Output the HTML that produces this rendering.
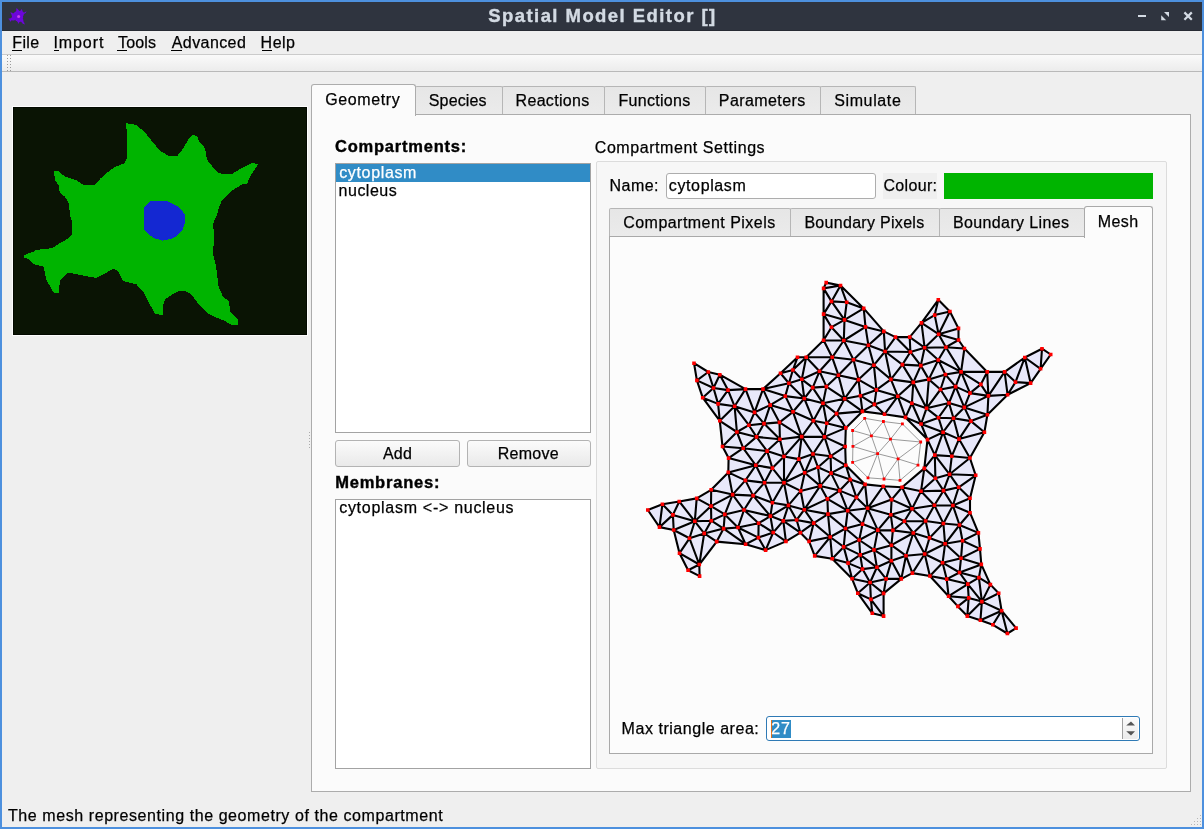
<!DOCTYPE html>
<html><head><meta charset="utf-8"><title>Spatial Model Editor</title>
<style>
*{box-sizing:border-box;margin:0;padding:0}
html,body{width:1204px;height:829px;overflow:hidden;background:#4d90de;font-family:"Liberation Sans",sans-serif}
.a{position:absolute}
#win{left:2px;top:2px;width:1200px;height:825px;background:#efefef}
#titlebar{left:2px;top:2px;width:1200px;height:29px;background:#2f343f;border-bottom:1px solid #272b33}
#menubar{left:2px;top:31px;width:1200px;height:24px;background:#efefef;border-bottom:1px solid #cbcbcb}
#toolbar{left:2px;top:55px;width:1200px;height:17px;background:linear-gradient(#fafafa,#ececec);border-bottom:1px solid #b9b9b9}
.dot{width:1px;height:1px;background:#9a9a9a}
.cellframe{left:12px;top:106px;width:296px;height:230px;background:#fdfdfd}
.cellimg{position:absolute;left:13px;top:107px}
.tabpane{left:311px;top:114px;width:880px;height:678px;background:#fbfbfb;border:1px solid #acacac}
.tab{background:linear-gradient(#e6e6e6,#ebebeb);border:1px solid #b6b6b6;border-bottom:none;border-radius:2px 2px 0 0}
.tabsel{background:#fbfbfb;border:1px solid #acacac;border-bottom:none;border-radius:3px 3px 0 0}
.list{background:#fff;border:1px solid #a3a3a3}
.btn{background:linear-gradient(#fbfbfb,#e9e9e9);border:1px solid #b3b3b3;border-radius:3px}
.group{left:596px;top:161px;width:571px;height:608px;background:#f7f7f7;border:1px solid #dcdcdc;border-radius:2px}
.ledit{background:#fff;border:1px solid #adadad;border-radius:3px}
.innerpane{left:609px;top:236px;width:544px;height:518px;background:#fcfcfc;border:1px solid #a9a9a9}
.mesh{position:absolute;left:640px;top:270px}
.spin{left:766px;top:716px;width:374px;height:25px;background:#fff;border:1.6px solid #2f7ab5;border-radius:3px}
svg.txt{position:absolute;left:0;top:0;will-change:transform;transform:translateZ(0)}
</style></head><body>
<div id="win" class="a"></div>
<div id="titlebar" class="a"></div>
<div class="a" style="left:8px;top:8px"><svg class="appicon" width="20" height="18" viewBox="0 0 20 18"><path d="M8.4,0.3 L9.1,0.5 L10.1,1.5 L11,2.6 L11.5,2.9 L12.2,2.9 L12.7,2.2 L13.5,1.1 L14,1.7 L14.4,2.5 L14.4,3 L14.7,3.4 L15.7,4.4 L16.5,4.4 L17.4,3.8 L18.2,3.4 L18.6,3.6 L18.1,4.3 L17.7,5 L16.6,5.5 L15.7,6.4 L15.6,7.2 L14.9,8.4 L15.2,9.2 L14.9,10.3 L14.9,10.9 L15.3,11.8 L15.4,12.6 L15.4,13.3 L15.8,14.2 L16.2,14.6 L16.4,15.4 L17,16.2 L16.6,16.5 L16,16.1 L15.4,15.9 L14.8,15.7 L14.4,15.2 L14,14.8 L13.1,13.8 L12.3,13.7 L11.8,14 L11,14.6 L11,15.7 L10.5,15.6 L9.9,14.6 L9.6,14 L8.7,13 L7.9,12.9 L7.6,12.2 L7.3,11.8 L6.6,12.2 L5.7,12.6 L4.8,12.4 L3.5,12.2 L2.7,13.3 L2.7,13.8 L2.2,13.6 L1.8,12.8 L1.5,11.7 L0.9,11.6 L0.4,10.8 L1,10.5 L1.8,10.4 L2.6,10.3 L3.2,9.9 L4,9.1 L4,8.4 L3.8,7.9 L3.6,6.7 L2.8,5.6 L2.6,4.8 L2.4,4.1 L3.1,4.4 L3.6,4.6 L4.8,5.2 L5.6,5.2 L6.4,4.5 L7.1,3.8 L7.5,3.8 L8.3,3 L8.3,1.8 L8.3,0.6 Z" fill="#6c06da"/><circle cx="10.6" cy="8.4" r="1.5" fill="#c840f0"/></svg></div>
<!-- window buttons -->
<div class="a" style="left:1138px;top:15px;width:8px;height:2px;background:#d3dae3"></div>
<svg class="a" style="left:1160px;top:11px" width="10" height="10" viewBox="0 0 10 10"><path d="M1.2 9.2 L1.2 4.2 L6.2 9.2 Z M9 1 L9 6 L4 1 Z" fill="#d3dae3"/></svg>
<svg class="a" style="left:1183px;top:11px" width="10" height="10" viewBox="0 0 10 10"><path d="M1.4 1.4 L8.8 8.8 M8.8 1.4 L1.4 8.8" stroke="#d3dae3" stroke-width="2.2"/></svg>
<div id="menubar" class="a"></div>
<div id="toolbar" class="a"></div>
<div class="a dot" style="left:309px;top:432px;background:#ababab"></div><div class="a dot" style="left:309px;top:435px;background:#ababab"></div><div class="a dot" style="left:309px;top:438px;background:#ababab"></div><div class="a dot" style="left:309px;top:441px;background:#ababab"></div><div class="a dot" style="left:309px;top:444px;background:#ababab"></div><div class="a dot" style="left:309px;top:447px;background:#ababab"></div><div class="a dot" style="left:593px;top:447px;background:#ababab"></div><div class="a dot" style="left:593px;top:450px;background:#ababab"></div><div class="a dot" style="left:593px;top:453px;background:#ababab"></div><div class="a dot" style="left:593px;top:456px;background:#ababab"></div><div class="a dot" style="left:593px;top:459px;background:#ababab"></div><div class="a dot" style="left:593px;top:462px;background:#ababab"></div><div class="a dot" style="left:7px;top:55px"></div><div class="a dot" style="left:7px;top:58px"></div><div class="a dot" style="left:7px;top:61px"></div><div class="a dot" style="left:7px;top:64px"></div><div class="a dot" style="left:7px;top:67px"></div><div class="a dot" style="left:7px;top:70px"></div><div class="a dot" style="left:10px;top:55px"></div><div class="a dot" style="left:10px;top:58px"></div><div class="a dot" style="left:10px;top:61px"></div><div class="a dot" style="left:10px;top:64px"></div><div class="a dot" style="left:10px;top:67px"></div><div class="a dot" style="left:10px;top:70px"></div>
<div class="a cellframe"></div>
<svg class="cellimg" width="294" height="228" viewBox="0 0 294 228" shape-rendering="crispEdges"><rect width="294" height="228" fill="#0a1404"/><rect x="0.5" y="0.5" width="293" height="227" fill="none" stroke="#030900"/><path d="M113 16h2v1h-2zM113 17h8v1h-8zM113 18h11v1h-11zM113 19h12v1h-12zM113 20h13v1h-13zM113 21h14v1h-14zM114 22h15v1h-15zM114 23h16v1h-16zM114 24h17v1h-17zM114 25h18v1h-18zM114 26h19v1h-19zM114 27h20v1h-20zM114 28h20v1h-20zM179 28h3v1h-3zM114 29h21v1h-21zM178 29h6v1h-6zM114 30h22v1h-22zM177 30h8v1h-8zM114 31h23v1h-23zM176 31h9v1h-9zM114 32h24v1h-24zM175 32h10v1h-10zM114 33h24v1h-24zM175 33h11v1h-11zM114 34h25v1h-25zM174 34h12v1h-12zM114 35h26v1h-26zM174 35h13v1h-13zM114 36h27v1h-27zM173 36h15v1h-15zM114 37h28v1h-28zM172 37h17v1h-17zM114 38h29v1h-29zM172 38h18v1h-18zM114 39h29v1h-29zM171 39h20v1h-20zM114 40h30v1h-30zM171 40h20v1h-20zM114 41h31v1h-31zM170 41h22v1h-22zM114 42h32v1h-32zM169 42h23v1h-23zM114 43h33v1h-33zM169 43h23v1h-23zM114 44h34v1h-34zM168 44h25v1h-25zM114 45h36v1h-36zM167 45h26v1h-26zM114 46h38v1h-38zM166 46h27v1h-27zM114 47h39v1h-39zM165 47h28v1h-28zM114 48h41v1h-41zM165 48h28v1h-28zM114 49h79v1h-79zM114 50h80v1h-80zM114 51h80v1h-80zM113 52h81v1h-81zM113 53h82v1h-82zM112 54h83v1h-83zM112 55h84v1h-84zM111 56h86v1h-86zM238 56h4v1h-4zM108 57h90v1h-90zM236 57h9v1h-9zM106 58h93v1h-93zM234 58h10v1h-10zM103 59h96v1h-96zM232 59h12v1h-12zM101 60h99v1h-99zM230 60h13v1h-13zM100 61h101v1h-101zM228 61h14v1h-14zM98 62h104v1h-104zM226 62h16v1h-16zM97 63h106v1h-106zM225 63h16v1h-16zM41 64h5v1h-5zM96 64h108v1h-108zM223 64h17v1h-17zM41 65h6v1h-6zM94 65h111v1h-111zM221 65h19v1h-19zM41 66h7v1h-7zM93 66h115v1h-115zM220 66h19v1h-19zM41 67h8v1h-8zM92 67h146v1h-146zM41 68h10v1h-10zM91 68h147v1h-147zM42 69h10v1h-10zM90 69h147v1h-147zM42 70h13v1h-13zM89 70h148v1h-148zM42 71h16v1h-16zM87 71h149v1h-149zM42 72h19v1h-19zM87 72h149v1h-149zM42 73h22v1h-22zM86 73h149v1h-149zM43 74h22v1h-22zM85 74h150v1h-150zM44 75h23v1h-23zM84 75h151v1h-151zM44 76h24v1h-24zM83 76h151v1h-151zM45 77h25v1h-25zM82 77h147v1h-147zM46 78h181v1h-181zM46 79h180v1h-180zM46 80h178v1h-178zM46 81h176v1h-176zM46 82h175v1h-175zM46 83h173v1h-173zM47 84h171v1h-171zM47 85h170v1h-170zM48 86h168v1h-168zM49 87h166v1h-166zM50 88h164v1h-164zM52 89h161v1h-161zM52 90h160v1h-160zM53 91h158v1h-158zM54 92h156v1h-156zM54 93h155v1h-155zM55 94h82v1h-82zM155 94h53v1h-53zM55 95h81v1h-81zM157 95h51v1h-51zM56 96h79v1h-79zM159 96h49v1h-49zM56 97h78v1h-78zM161 97h46v1h-46zM56 98h77v1h-77zM163 98h44v1h-44zM56 99h76v1h-76zM165 99h41v1h-41zM56 100h75v1h-75zM166 100h40v1h-40zM56 101h75v1h-75zM167 101h39v1h-39zM56 102h75v1h-75zM168 102h37v1h-37zM57 103h74v1h-74zM169 103h36v1h-36zM57 104h74v1h-74zM170 104h35v1h-35zM57 105h74v1h-74zM170 105h35v1h-35zM57 106h74v1h-74zM171 106h33v1h-33zM57 107h74v1h-74zM172 107h32v1h-32zM57 108h74v1h-74zM172 108h32v1h-32zM57 109h74v1h-74zM172 109h31v1h-31zM58 110h73v1h-73zM172 110h31v1h-31zM58 111h73v1h-73zM172 111h30v1h-30zM58 112h73v1h-73zM172 112h30v1h-30zM59 113h72v1h-72zM172 113h29v1h-29zM59 114h72v1h-72zM172 114h29v1h-29zM59 115h72v1h-72zM172 115h29v1h-29zM59 116h72v1h-72zM172 116h28v1h-28zM59 117h72v1h-72zM171 117h29v1h-29zM59 118h72v1h-72zM171 118h29v1h-29zM59 119h72v1h-72zM171 119h29v1h-29zM59 120h72v1h-72zM170 120h30v1h-30zM59 121h72v1h-72zM170 121h30v1h-30zM59 122h72v1h-72zM170 122h31v1h-31zM59 123h73v1h-73zM169 123h32v1h-32zM59 124h74v1h-74zM168 124h33v1h-33zM59 125h75v1h-75zM167 125h34v1h-34zM59 126h76v1h-76zM166 126h35v1h-35zM59 127h77v1h-77zM165 127h36v1h-36zM58 128h79v1h-79zM164 128h37v1h-37zM57 129h82v1h-82zM163 129h38v1h-38zM56 130h84v1h-84zM161 130h40v1h-40zM55 131h87v1h-87zM159 131h42v1h-42zM53 132h93v1h-93zM155 132h46v1h-46zM52 133h97v1h-97zM150 133h51v1h-51zM50 134h151v1h-151zM48 135h153v1h-153zM46 136h155v1h-155zM45 137h156v1h-156zM43 138h158v1h-158zM42 139h158v1h-158zM40 140h160v1h-160zM36 141h164v1h-164zM27 142h173v1h-173zM22 143h178v1h-178zM21 144h179v1h-179zM18 145h182v1h-182zM15 146h185v1h-185zM13 147h187v1h-187zM11 148h189v1h-189zM11 149h190v1h-190zM11 150h190v1h-190zM14 151h187v1h-187zM16 152h185v1h-185zM17 153h185v1h-185zM18 154h184v1h-184zM19 155h183v1h-183zM20 156h182v1h-182zM22 157h181v1h-181zM26 158h177v1h-177zM30 159h173v1h-173zM31 160h172v1h-172zM31 161h172v1h-172zM31 162h68v1h-68zM102 162h101v1h-101zM31 163h66v1h-66zM104 163h100v1h-100zM32 164h63v1h-63zM105 164h99v1h-99zM32 165h62v1h-62zM106 165h98v1h-98zM32 166h22v1h-22zM60 166h32v1h-32zM106 166h98v1h-98zM32 167h21v1h-21zM65 167h25v1h-25zM107 167h97v1h-97zM32 168h20v1h-20zM70 168h18v1h-18zM107 168h97v1h-97zM33 169h18v1h-18zM75 169h11v1h-11zM108 169h96v1h-96zM33 170h17v1h-17zM81 170h3v1h-3zM108 170h96v1h-96zM33 171h16v1h-16zM109 171h96v1h-96zM33 172h15v1h-15zM109 172h96v1h-96zM34 173h13v1h-13zM110 173h95v1h-95zM34 174h13v1h-13zM112 174h93v1h-93zM35 175h12v1h-12zM116 175h89v1h-89zM35 176h12v1h-12zM120 176h85v1h-85zM36 177h11v1h-11zM124 177h81v1h-81zM37 178h9v1h-9zM124 178h81v1h-81zM37 179h9v1h-9zM125 179h81v1h-81zM38 180h8v1h-8zM126 180h80v1h-80zM38 181h8v1h-8zM127 181h79v1h-79zM39 182h7v1h-7zM128 182h79v1h-79zM39 183h7v1h-7zM129 183h78v1h-78zM40 184h6v1h-6zM130 184h35v1h-35zM173 184h35v1h-35zM41 185h5v1h-5zM131 185h32v1h-32zM175 185h33v1h-33zM131 186h30v1h-30zM177 186h32v1h-32zM132 187h27v1h-27zM178 187h31v1h-31zM132 188h26v1h-26zM179 188h30v1h-30zM133 189h23v1h-23zM180 189h30v1h-30zM133 190h22v1h-22zM181 190h30v1h-30zM134 191h19v1h-19zM181 191h31v1h-31zM134 192h18v1h-18zM182 192h32v1h-32zM135 193h17v1h-17zM183 193h32v1h-32zM135 194h16v1h-16zM184 194h32v1h-32zM136 195h15v1h-15zM184 195h32v1h-32zM136 196h15v1h-15zM185 196h31v1h-31zM137 197h13v1h-13zM186 197h30v1h-30zM137 198h13v1h-13zM187 198h29v1h-29zM138 199h12v1h-12zM188 199h29v1h-29zM139 200h11v1h-11zM189 200h28v1h-28zM139 201h11v1h-11zM190 201h27v1h-27zM140 202h10v1h-10zM191 202h26v1h-26zM140 203h10v1h-10zM192 203h25v1h-25zM141 204h9v1h-9zM193 204h24v1h-24zM141 205h9v1h-9zM194 205h24v1h-24zM142 206h8v1h-8zM195 206h24v1h-24zM146 207h4v1h-4zM197 207h23v1h-23zM199 208h22v1h-22zM201 209h21v1h-21zM203 210h20v1h-20zM206 211h18v1h-18zM208 212h17v1h-17zM211 213h14v1h-14zM213 214h12v1h-12zM214 215h11v1h-11zM216 216h9v1h-9zM218 217h7v1h-7z" fill="#00b400"/><path d="M137 94h18v1h-18zM136 95h21v1h-21zM135 96h24v1h-24zM134 97h27v1h-27zM133 98h30v1h-30zM132 99h33v1h-33zM131 100h35v1h-35zM131 101h36v1h-36zM131 102h37v1h-37zM131 103h38v1h-38zM131 104h39v1h-39zM131 105h39v1h-39zM131 106h40v1h-40zM131 107h41v1h-41zM131 108h41v1h-41zM131 109h41v1h-41zM131 110h41v1h-41zM131 111h41v1h-41zM131 112h41v1h-41zM131 113h41v1h-41zM131 114h41v1h-41zM131 115h41v1h-41zM131 116h41v1h-41zM131 117h40v1h-40zM131 118h40v1h-40zM131 119h40v1h-40zM131 120h39v1h-39zM131 121h39v1h-39zM131 122h39v1h-39zM132 123h37v1h-37zM133 124h35v1h-35zM134 125h33v1h-33zM135 126h31v1h-31zM136 127h29v1h-29zM137 128h27v1h-27zM139 129h24v1h-24zM140 130h21v1h-21zM142 131h17v1h-17zM146 132h9v1h-9zM149 133h1v1h-1z" fill="#1428d2"/></svg>
<!-- outer tabs -->
<div class="a tab" style="left:415px;top:86px;width:88px;height:29px"></div>
<div class="a tab" style="left:502px;top:86px;width:103px;height:29px"></div>
<div class="a tab" style="left:604px;top:86px;width:102px;height:29px"></div>
<div class="a tab" style="left:705px;top:86px;width:116px;height:29px"></div>
<div class="a tab" style="left:820px;top:86px;width:96px;height:29px"></div>
<div class="a tabpane"></div>
<div class="a tabsel" style="left:311px;top:84px;width:105px;height:32px"></div>
<!-- left column -->
<div class="a list" style="left:335px;top:163px;width:256px;height:270px"></div>
<div class="a" style="left:336px;top:164px;width:254px;height:18px;background:#308cc6"></div>
<div class="a btn" style="left:335px;top:440px;width:125px;height:27px"></div>
<div class="a btn" style="left:467px;top:440px;width:124px;height:27px"></div>
<div class="a list" style="left:335px;top:499px;width:256px;height:270px"></div>
<!-- group box -->
<div class="a group"></div>
<div class="a ledit" style="left:666px;top:173px;width:210px;height:26px"></div>
<div class="a" style="left:883px;top:173px;width:54px;height:26px;background:#efefef"></div>
<div class="a" style="left:944px;top:173px;width:209px;height:26px;background:#00b400"></div>
<!-- inner tabs -->
<div class="a tab" style="left:609px;top:208px;width:182px;height:29px"></div>
<div class="a tab" style="left:790px;top:208px;width:150px;height:29px"></div>
<div class="a tab" style="left:939px;top:208px;width:146px;height:29px"></div>
<div class="a innerpane"></div>
<div class="a tabsel" style="left:1084px;top:206px;width:69px;height:32px;background:#fcfcfc;border-color:#a9a9a9"></div>
<svg class="mesh" width="430" height="380" viewBox="0 0 430 380"><path d="M361.6,340.7L376.1,358.1L367.4,363.5ZM400.6,98.8L402,78.7L410.7,84.5ZM400.6,98.8L384.8,87.5L402,78.7ZM384.8,87.5L400.6,98.8L390.6,113.1ZM338.4,262.9L340,278.9L322.5,270.7ZM375.5,112.1L367.6,124.8L364.6,101.9ZM367.6,124.8L375.5,112.1L390.6,113.1ZM384.8,87.5L375.5,112.1L364.6,101.9ZM375.5,112.1L384.8,87.5L390.6,113.1ZM340,278.9L321,288.3L322.5,270.7ZM303.4,253.5L289.5,267.9L285.6,251ZM294.4,235.3L303.4,253.5L285.6,251ZM289.5,267.9L273.3,263L285.6,251ZM273.3,263L266,285.7L251.4,275.2ZM96.9,162L79.8,150.8L94.6,136.3ZM32.9,244.9L39.3,231.5L54.8,251.3ZM33.7,260L54.8,251.3L49.5,268.3ZM33.7,260L32.9,244.9L54.8,251.3ZM39.5,283.2L33.7,260L49.5,268.3ZM92.6,224.6L113.1,225.6L104,240ZM71.2,219.8L92.6,224.6L71,236.1ZM367.6,124.8L348.4,125.9L364.6,101.9ZM348.4,125.9L347.2,101.9L364.6,101.9ZM347.2,101.9L348.4,125.9L340.8,114.4ZM236.4,119.9L233.9,95.2L250.9,109.4ZM233.9,95.2L236.4,119.9L218.5,109.6ZM191.5,31.4L204.5,49.9L183.6,44.1ZM73.5,118L78.1,133.9L62.7,127.7ZM79.8,150.8L78.1,133.9L94.6,136.3ZM78.1,133.9L79.8,150.8L62.7,127.7ZM73.5,118L68.3,102L79.8,104.7ZM341.3,294.4L321,288.3L340,278.9ZM321,288.3L305.1,273.8L322.5,270.7ZM303.4,253.5L305.1,273.8L289.5,267.9ZM309.6,204.3L329.9,188L335.7,205.3ZM329.9,188L309.6,204.3L311.8,186.2ZM294.8,185.1L309.6,204.3L295.4,208.2ZM309.6,204.3L294.8,185.1L311.8,186.2ZM199.7,220.6L207.7,240.7L187.4,228.9ZM222.5,254.1L237.8,260.1L219.2,270ZM234,279.9L237.8,260.1L251.4,275.2ZM237.8,260.1L234,279.9L219.2,270ZM230.9,329.4L243.6,346.1L232.3,343.3ZM222.5,299.1L236.9,297.3L230.1,312.5ZM341.9,331.6L358.7,323.3L361.6,340.7ZM358.7,323.3L341.9,331.6L350.4,314.6ZM352.9,354.8L361.6,340.7L367.4,363.5ZM273.3,112.4L257.8,126.3L250.9,109.4ZM257.8,126.3L236.4,119.9L250.9,109.4ZM236.4,119.9L257.8,126.3L234.4,134.4ZM273.3,263L264.4,251.3L285.6,251ZM243.3,216.2L227.6,238.3L225.1,214.4ZM227.6,238.3L222.5,254.1L207.7,240.7ZM227.6,238.3L250.8,244.8L237.8,260.1ZM222.5,254.1L227.6,238.3L237.8,260.1ZM319.5,255L338.4,262.9L322.5,270.7ZM305.1,273.8L319.5,255L322.5,270.7ZM319.5,255L305.1,273.8L303.4,253.5ZM305.1,273.8L284.7,284L289.5,267.9ZM284.7,284L273.3,263L289.5,267.9ZM273.3,263L284.7,284L266,285.7ZM54.8,251.3L64.2,263.4L49.5,268.3ZM118.6,253.2L98,257.5L104,240ZM48.1,300.3L59.3,294.5L59.6,306.1ZM59.3,294.5L39.5,283.2L49.5,268.3ZM59.3,294.5L48.1,300.3L39.5,283.2ZM64.2,263.4L59.3,294.5L49.5,268.3ZM59.3,294.5L64.2,263.4L76.7,271.6ZM96.9,162L82.5,176.5L79.8,150.8ZM22.4,234.3L39.3,231.5L32.9,244.9ZM33.7,260L19.5,257.1L32.9,244.9ZM22.4,234.3L19.5,257.1L7.8,240ZM19.5,257.1L22.4,234.3L32.9,244.9ZM56.7,228.4L71.2,219.8L71,236.1ZM54.8,251.3L56.7,228.4L71,236.1ZM39.3,231.5L56.7,228.4L54.8,251.3ZM347.4,144.8L348.4,125.9L367.6,124.8ZM321.1,101.9L347.2,101.9L340.8,114.4ZM347.4,144.8L324.3,137.4L348.4,125.9ZM324.3,137.4L313.5,148.2L309,133ZM139.9,169.3L116.5,166.9L124,153.6ZM116.5,166.9L139.9,169.3L127.1,181.1ZM213.5,89.7L192.2,87.3L203.8,70.5ZM213.5,89.7L233.9,95.2L218.5,109.6ZM192.2,87.3L183.6,70.2L203.8,70.5ZM183.6,18.4L191.5,31.4L183.6,44.1ZM200.5,15.5L183.6,18.4L186.2,12.6ZM183.6,18.4L200.5,15.5L191.5,31.4ZM204.5,49.9L206.7,32.3L223.7,38.4ZM206.7,32.3L204.5,49.9L191.5,31.4ZM206.7,32.3L200.5,15.5L223.7,38.4ZM200.5,15.5L206.7,32.3L191.5,31.4ZM88,120.1L105.5,119.1L94.6,136.3ZM78.1,133.9L88,120.1L94.6,136.3ZM88,120.1L78.1,133.9L73.5,118ZM88,120.1L73.5,118L79.8,104.7ZM105.5,119.1L88,120.1L79.8,104.7ZM140.5,103.2L157.5,87.3L152.9,100ZM114.5,142.4L105.5,119.1L123,119.1ZM130.2,135.1L114.5,142.4L123,119.1ZM105.5,119.1L114.5,142.4L94.6,136.3ZM114.5,142.4L130.2,135.1L124,153.6ZM56.9,110.4L73.5,118L62.7,127.7ZM56.9,110.4L68.3,102L73.5,118ZM68.3,102L56.9,110.4L54,93.2ZM306.7,309.1L308.6,326.2L289.9,306ZM341.3,294.4L319.5,302.5L321,288.3ZM302.6,292.7L305.1,273.8L321,288.3ZM319.5,302.5L302.6,292.7L321,288.3ZM302.6,292.7L319.5,302.5L306.7,309.1ZM302.6,292.7L284.7,284L305.1,273.8ZM302.6,292.7L306.7,309.1L289.9,306ZM284.7,284L302.6,292.7L289.9,306ZM284.3,198.4L294.8,185.1L295.4,208.2ZM207.7,240.7L188,244.1L187.4,228.9ZM190.2,267L192.2,288.8L174.7,285.9ZM236.9,297.3L246.1,308.9L230.1,312.5ZM272.4,303.1L261.3,308.9L266,285.7ZM272.4,303.1L284.7,284L289.9,306ZM284.7,284L272.4,303.1L266,285.7ZM230.9,329.4L217.8,323.2L230.1,312.5ZM217.8,323.2L230.9,329.4L232.3,343.3ZM220.2,284.9L234,279.9L236.9,297.3ZM222.5,299.1L220.2,284.9L236.9,297.3ZM234,279.9L220.2,284.9L219.2,270ZM220.2,284.9L222.5,299.1L208.1,293.1ZM341.9,331.6L340.4,350.3L327.3,346.1ZM340.4,350.3L341.9,331.6L361.6,340.7ZM352.9,354.8L340.4,350.3L361.6,340.7ZM257.8,126.3L244.5,144.3L234.4,134.4ZM265.5,147.4L244.5,144.3L257.8,126.3ZM272,238.7L294.4,235.3L285.6,251ZM264.4,251.3L272,238.7L285.6,251ZM272,238.7L264.4,251.3L250.8,244.8ZM250.8,244.8L252.9,260.4L237.8,260.1ZM264.4,251.3L252.9,260.4L250.8,244.8ZM237.8,260.1L252.9,260.4L251.4,275.2ZM252.9,260.4L273.3,263L251.4,275.2ZM252.9,260.4L264.4,251.3L273.3,263ZM227.6,238.3L216.4,227.4L225.1,214.4ZM216.4,227.4L227.6,238.3L207.7,240.7ZM199.7,220.6L216.4,227.4L207.7,240.7ZM312.9,235.5L303.4,253.5L294.4,235.3ZM312.9,235.5L319.5,255L303.4,253.5ZM71.3,250.7L54.8,251.3L71,236.1ZM71.3,250.7L64.2,263.4L54.8,251.3ZM116.5,166.9L103.2,178.2L96.9,162ZM82.5,176.5L103.2,178.2L88.6,188.1ZM103.2,178.2L82.5,176.5L96.9,162ZM103.2,178.2L116.5,166.9L127.1,181.1ZM124.5,212.7L132.4,198.1L144,212.7ZM71.2,219.8L88.3,202.4L92.6,224.6ZM160.7,220.9L148.4,235.4L144,212.7ZM132.4,232.8L124.5,212.7L144,212.7ZM148.4,235.4L132.4,232.8L144,212.7ZM124.5,212.7L132.4,232.8L113.1,225.6ZM321.1,101.9L324.4,78.5L347.2,101.9ZM324.4,78.5L305.9,77.2L318.5,70ZM305.9,77.2L324.4,78.5L321.1,101.9ZM286.5,138.3L300.5,119.5L309,133ZM348.4,125.9L330,123.1L340.8,114.4ZM324.3,137.4L330,123.1L348.4,125.9ZM330,123.1L321.1,101.9L340.8,114.4ZM319,169.1L329.9,188L311.8,186.2ZM329.9,188L319,169.1L344.4,162.2ZM220.4,125.7L204.6,128.7L218.5,109.6ZM220.4,125.7L236.4,119.9L234.4,134.4ZM236.4,119.9L220.4,125.7L218.5,109.6ZM204.6,128.7L198.4,105.2L218.5,109.6ZM198.4,105.2L213.5,89.7L218.5,109.6ZM213.5,89.7L198.4,105.2L192.2,87.3ZM204.5,49.9L191.5,57.2L183.6,44.1ZM191.5,57.2L183.6,70.2L183.6,44.1ZM191.5,57.2L204.5,49.9L203.8,70.5ZM183.6,70.2L191.5,57.2L203.8,70.5ZM166.2,87.3L183.6,70.2L192.2,87.3ZM157.5,87.3L166.2,87.3L152.9,100ZM213.5,89.7L228.4,75.3L233.9,95.2ZM228.4,75.3L213.5,89.7L203.8,70.5ZM108.9,155.2L116.5,166.9L96.9,162ZM108.9,155.2L96.9,162L94.6,136.3ZM114.5,142.4L108.9,155.2L94.6,136.3ZM116.5,166.9L108.9,155.2L124,153.6ZM108.9,155.2L114.5,142.4L124,153.6ZM298.6,64.2L318.5,58.4L318.5,70ZM305.9,77.2L298.6,64.2L318.5,70ZM318.5,58.4L298.6,64.2L309.9,41.5ZM298.6,64.2L305.9,77.2L284.6,77.7ZM280.8,95.6L288.8,109.4L273.3,112.4ZM288.8,109.4L286.5,138.3L273.3,112.4ZM286.5,138.3L288.8,109.4L300.5,119.5ZM300.5,119.5L288.8,109.4L305.4,104.5ZM305.9,77.2L298.3,90L284.6,77.7ZM298.3,90L280.8,95.6L284.6,77.7ZM298.3,90L321.1,101.9L305.4,104.5ZM298.3,90L305.9,77.2L321.1,101.9ZM288.8,109.4L298.3,90L305.4,104.5ZM298.3,90L288.8,109.4L280.8,95.6ZM262.4,94.6L273.3,112.4L250.9,109.4ZM262.4,94.6L280.8,95.6L273.3,112.4ZM338.9,307.6L341.3,294.4L350.4,314.6ZM338.9,307.6L319.5,302.5L341.3,294.4ZM341.9,331.6L338.9,307.6L350.4,314.6ZM327.8,314.1L308.6,326.2L306.7,309.1ZM319.5,302.5L327.8,314.1L306.7,309.1ZM338.9,307.6L327.8,314.1L319.5,302.5ZM327.8,314.1L338.9,307.6L341.9,331.6ZM205.5,258.5L188,244.1L207.7,240.7ZM188,244.1L205.5,258.5L190.2,267ZM222.5,254.1L205.5,258.5L207.7,240.7ZM205.5,258.5L222.5,254.1L219.2,270ZM169.1,271.4L190.2,267L174.7,285.9ZM156.6,250L143.3,250.9L148.4,235.4ZM188,244.1L164.3,239.7L187.4,228.9ZM164.3,239.7L156.6,250L148.4,235.4ZM160.7,220.9L164.3,239.7L148.4,235.4ZM203.7,276.9L192.2,288.8L190.2,267ZM203.7,276.9L205.5,258.5L219.2,270ZM205.5,258.5L203.7,276.9L190.2,267ZM192.2,288.8L203.7,276.9L208.1,293.1ZM220.2,284.9L203.7,276.9L219.2,270ZM203.7,276.9L220.2,284.9L208.1,293.1ZM243.6,323.4L230.9,329.4L230.1,312.5ZM246.1,308.9L243.6,323.4L230.1,312.5ZM230.9,329.4L243.6,323.4L243.6,346.1ZM243.6,323.4L246.1,308.9L261.3,308.9ZM261.3,308.9L251.4,290.8L266,285.7ZM246.1,308.9L251.4,290.8L261.3,308.9ZM251.4,290.8L246.1,308.9L236.9,297.3ZM266,285.7L251.4,290.8L251.4,275.2ZM251.4,290.8L234,279.9L251.4,275.2ZM234,279.9L251.4,290.8L236.9,297.3ZM222.5,299.1L212.1,308.8L208.1,293.1ZM212.1,308.8L192.2,288.8L208.1,293.1ZM212.1,308.8L222.5,299.1L230.1,312.5ZM217.8,323.2L212.1,308.8L230.1,312.5ZM272,238.7L281,221.3L294.4,235.3ZM281,221.3L272,238.7L262.1,217.2ZM281,221.3L284.3,198.4L295.4,208.2ZM281,221.3L262.1,217.2L284.3,198.4ZM251.6,229.6L272,238.7L250.8,244.8ZM272,238.7L251.6,229.6L262.1,217.2ZM262.1,217.2L251.6,229.6L243.3,216.2ZM251.6,229.6L227.6,238.3L243.3,216.2ZM227.6,238.3L251.6,229.6L250.8,244.8ZM319.5,255L330,242.7L338.4,262.9ZM312.9,235.5L330,242.7L319.5,255ZM330,242.7L312.9,235.5L330,228.3ZM312.9,235.5L318.7,217.3L330,228.3ZM318.7,217.3L309.6,204.3L335.7,205.3ZM330,228.3L318.7,217.3L335.7,205.3ZM98,257.5L84.8,244.4L104,240ZM84.8,244.4L71.3,250.7L71,236.1ZM92.6,224.6L84.8,244.4L71,236.1ZM84.8,244.4L92.6,224.6L104,240ZM118.4,267.6L98,257.5L118.6,253.2ZM118.4,267.6L105.6,274.2L98,257.5ZM105.6,274.2L118.4,267.6L125.6,280.1ZM105.4,210.4L124.5,212.7L113.1,225.6ZM105.4,210.4L113.1,225.6L92.6,224.6ZM88.3,202.4L105.4,210.4L92.6,224.6ZM132.4,232.8L130.4,246.1L113.1,225.6ZM130.4,246.1L118.6,253.2L104,240ZM113.1,225.6L130.4,246.1L104,240ZM130.4,246.1L132.4,232.8L148.4,235.4ZM143.3,250.9L130.4,246.1L148.4,235.4ZM271.9,133.3L257.8,126.3L273.3,112.4ZM286.5,138.3L271.9,133.3L273.3,112.4ZM271.9,133.3L265.5,147.4L257.8,126.3ZM265.5,147.4L271.9,133.3L281.1,154ZM271.9,133.3L286.5,138.3L281.1,154ZM313.5,148.2L298.5,147.7L309,133ZM298.5,147.7L286.5,138.3L309,133ZM286.5,138.3L298.5,147.7L281.1,154ZM315.6,116.6L324.3,137.4L309,133ZM315.6,116.6L330,123.1L324.3,137.4ZM300.5,119.5L315.6,116.6L309,133ZM330,123.1L315.6,116.6L321.1,101.9ZM321.1,101.9L315.6,116.6L305.4,104.5ZM315.6,116.6L300.5,119.5L305.4,104.5ZM294.8,185.1L303.1,162.2L311.8,186.2ZM303.1,162.2L319,169.1L311.8,186.2ZM298.5,147.7L303.1,162.2L281.1,154ZM319,169.1L303.1,162.2L313.5,148.2ZM303.1,162.2L298.5,147.7L313.5,148.2ZM319,169.1L330.9,151.1L344.4,162.2ZM330.9,151.1L319,169.1L313.5,148.2ZM330.9,151.1L313.5,148.2L324.3,137.4ZM330.9,151.1L347.4,144.8L344.4,162.2ZM330.9,151.1L324.3,137.4L347.4,144.8ZM148.9,113.2L140.5,103.2L152.9,100ZM140.5,103.2L148.9,113.2L123,119.1ZM186.4,116.6L198.4,105.2L204.6,128.7ZM183,133.2L186.4,116.6L204.6,128.7ZM172.7,117.6L186.4,116.6L183,133.2ZM173.4,150.7L183,133.2L186.7,153.3ZM210.3,209.6L205.8,195.3L225.1,214.4ZM216.4,227.4L210.3,209.6L225.1,214.4ZM210.3,209.6L216.4,227.4L199.7,220.6ZM196.5,143.6L205.8,157.9L186.7,153.3ZM183,133.2L196.5,143.6L186.7,153.3ZM196.5,143.6L183,133.2L204.6,128.7ZM220.4,125.7L222.4,141.4L204.6,128.7ZM222.4,141.4L196.5,143.6L204.6,128.7ZM196.5,143.6L222.4,141.4L205.8,157.9ZM222.4,141.4L220.4,125.7L234.4,134.4ZM244.5,144.3L222.4,141.4L234.4,134.4ZM205.8,157.9L184.5,166.9L186.7,153.3ZM184.5,166.9L205.8,157.9L205.2,176.5ZM184.5,166.9L173.4,150.7L186.7,153.3ZM281.5,52.9L284.6,77.7L269.7,67.1ZM281.5,52.9L298.6,64.2L284.6,77.7ZM228.4,75.3L245.1,81.5L233.9,95.2ZM233.9,95.2L245.1,81.5L250.9,109.4ZM245.1,81.5L262.4,94.6L250.9,109.4ZM245.1,81.5L243.8,61.4L255.5,67.1ZM243.8,61.4L245.1,81.5L228.4,75.3ZM270.4,82L255.5,67.1L269.7,67.1ZM284.6,77.7L270.4,82L269.7,67.1ZM270.4,82L245.1,81.5L255.5,67.1ZM245.1,81.5L270.4,82L262.4,94.6ZM280.8,95.6L270.4,82L284.6,77.7ZM262.4,94.6L270.4,82L280.8,95.6ZM308.6,326.2L328.7,327.9L317.9,336.4ZM327.8,314.1L328.7,327.9L308.6,326.2ZM328.7,327.9L327.8,314.1L341.9,331.6ZM328.7,327.9L327.3,346.1L317.9,336.4ZM328.7,327.9L341.9,331.6L327.3,346.1ZM143.3,250.9L160.4,262.7L145.9,271.4ZM160.4,262.7L143.3,250.9L156.6,250ZM303.5,220.6L312.9,235.5L294.4,235.3ZM303.5,220.6L318.7,217.3L312.9,235.5ZM303.5,220.6L281,221.3L295.4,208.2ZM281,221.3L303.5,220.6L294.4,235.3ZM309.6,204.3L303.5,220.6L295.4,208.2ZM318.7,217.3L303.5,220.6L309.6,204.3ZM84.8,244.4L83.6,258.6L71.3,250.7ZM64.2,263.4L83.6,258.6L76.7,271.6ZM71.3,250.7L83.6,258.6L64.2,263.4ZM83.6,258.6L84.8,244.4L98,257.5ZM83.6,258.6L105.6,274.2L76.7,271.6ZM105.6,274.2L83.6,258.6L98,257.5ZM133.2,262.5L143.3,250.9L145.9,271.4ZM133.2,262.5L145.9,271.4L125.6,280.1ZM118.4,267.6L133.2,262.5L125.6,280.1ZM133.2,262.5L130.4,246.1L143.3,250.9ZM133.2,262.5L118.4,267.6L118.6,253.2ZM130.4,246.1L133.2,262.5L118.6,253.2ZM139.9,169.3L144,186.5L127.1,181.1ZM144,186.5L132.4,198.1L127.1,181.1ZM132.4,198.1L144,186.5L144,212.7ZM144,186.5L158.8,189.1L144,212.7ZM115.8,195.3L132.4,198.1L124.5,212.7ZM105.4,210.4L115.8,195.3L124.5,212.7ZM132.4,198.1L115.8,195.3L127.1,181.1ZM115.8,195.3L103.2,178.2L127.1,181.1ZM103.2,178.2L115.8,195.3L88.6,188.1ZM115.8,195.3L88.3,202.4L88.6,188.1ZM115.8,195.3L105.4,210.4L88.3,202.4ZM303.1,162.2L287.5,169.6L281.1,154ZM287.5,169.6L303.1,162.2L294.8,185.1ZM284.3,198.4L287.5,169.6L294.8,185.1ZM287.5,169.6L265.5,147.4L281.1,154ZM166.2,87.3L161.8,109.3L152.9,100ZM161.8,109.3L148.9,113.2L152.9,100ZM198.4,105.2L179.5,101.3L192.2,87.3ZM186.4,116.6L179.5,101.3L198.4,105.2ZM179.5,101.3L166.2,87.3L192.2,87.3ZM179.5,101.3L186.4,116.6L172.7,117.6ZM179.5,101.3L161.8,109.3L166.2,87.3ZM161.8,109.3L179.5,101.3L172.7,117.6ZM158.8,189.1L161.7,166.6L173,184ZM161.7,166.6L184.5,166.9L173,184ZM184.5,166.9L161.7,166.6L173.4,150.7ZM161.7,166.6L144,186.5L139.9,169.3ZM144,186.5L161.7,166.6L158.8,189.1ZM164.3,128.5L172.7,117.6L183,133.2ZM173.4,150.7L164.3,128.5L183,133.2ZM161.8,109.3L164.3,128.5L148.9,113.2ZM164.3,128.5L161.8,109.3L172.7,117.6ZM205.8,195.3L190.6,186.2L205.2,176.5ZM190.6,186.2L178,197.3L173,184ZM190.6,186.2L184.5,166.9L205.2,176.5ZM184.5,166.9L190.6,186.2L173,184ZM191.1,203.1L210.3,209.6L199.7,220.6ZM210.3,209.6L191.1,203.1L205.8,195.3ZM191.1,203.1L190.6,186.2L205.8,195.3ZM190.6,186.2L191.1,203.1L178,197.3ZM164.7,202.8L160.7,220.9L144,212.7ZM158.8,189.1L164.7,202.8L144,212.7ZM164.7,202.8L158.8,189.1L173,184ZM178,197.3L164.7,202.8L173,184ZM243.8,61.4L225.5,56.9L223.7,38.4ZM225.5,56.9L243.8,61.4L228.4,75.3ZM225.5,56.9L204.5,49.9L223.7,38.4ZM204.5,49.9L225.5,56.9L203.8,70.5ZM225.5,56.9L228.4,75.3L203.8,70.5ZM298.6,64.2L294.7,45.1L309.9,41.5ZM281.5,52.9L294.7,45.1L298.6,64.2ZM309.9,41.5L294.7,45.1L298.3,29.8ZM294.7,45.1L281.5,52.9L298.3,29.8ZM164.3,239.7L173.7,253.1L156.6,250ZM173.7,253.1L160.4,262.7L156.6,250ZM173.7,253.1L164.3,239.7L188,244.1ZM160.4,262.7L173.7,253.1L169.1,271.4ZM173.7,253.1L188,244.1L190.2,267ZM169.1,271.4L173.7,253.1L190.2,267ZM161.7,166.6L153,141.8L173.4,150.7ZM153,141.8L164.3,128.5L173.4,150.7ZM180.2,215.9L199.7,220.6L187.4,228.9ZM180.2,215.9L191.1,203.1L199.7,220.6ZM191.1,203.1L180.2,215.9L178,197.3ZM180.2,215.9L164.7,202.8L178,197.3ZM164.7,202.8L180.2,215.9L160.7,220.9ZM164.3,239.7L180.2,215.9L187.4,228.9ZM180.2,215.9L164.3,239.7L160.7,220.9ZM139.5,152.4L161.7,166.6L139.9,169.3ZM139.5,152.4L153,141.8L161.7,166.6ZM139.5,152.4L139.9,169.3L124,153.6ZM130.2,135.1L139.5,152.4L124,153.6ZM153,141.8L139.5,152.4L130.2,135.1ZM164.3,128.5L145.3,126.1L148.9,113.2ZM153,141.8L145.3,126.1L164.3,128.5ZM145.3,126.1L153,141.8L130.2,135.1ZM145.3,126.1L130.2,135.1L123,119.1ZM148.9,113.2L145.3,126.1L123,119.1Z" fill="#e8e8fa" stroke="#e8e8fa" stroke-width="0.5"/><path d="M330,242.7L319.5,255M83.6,258.6L76.7,271.6M191.5,31.4L204.5,49.9M321.1,101.9L347.2,101.9M92.6,224.6L113.1,225.6M203.7,276.9L192.2,288.8M140.5,103.2L148.9,113.2M192.2,87.3L213.5,89.7M98,257.5L105.6,274.2M348.4,125.9L347.4,144.8M341.3,294.4L350.4,314.6M160.7,220.9L164.3,239.7M272,238.7L294.4,235.3M156.6,250L160.4,262.7M230.1,312.5L243.6,323.4M213.5,89.7L233.9,95.2M230.9,329.4L243.6,346.1M217.8,323.2L230.9,329.4M361.6,340.7L376.1,358.1M199.7,220.6L207.7,240.7M243.8,61.4L255.5,67.1M127.1,181.1L132.4,198.1M130.2,135.1L145.3,126.1M288.8,109.4L286.5,138.3M319.5,255L322.5,270.7M280.8,95.6L288.8,109.4M104,240L84.8,244.4M308.6,326.2L317.9,336.4M104,240L98,257.5M196.5,143.6L222.4,141.4M115.8,195.3L127.1,181.1M305.1,273.8L284.7,284M88.3,202.4L92.6,224.6M376.1,358.1L367.4,363.5M124,153.6L116.5,166.9M207.7,240.7L188,244.1M39.5,283.2L59.3,294.5M251.6,229.6L250.8,244.8M172.7,117.6L186.4,116.6M192.2,87.3L198.4,105.2M190.6,186.2L205.8,195.3M186.7,153.3L183,133.2M402,78.7L410.7,84.5M183.6,18.4L183.6,44.1M281.1,154L303.1,162.2M56.9,110.4L62.7,127.7M284.3,198.4L281,221.3M172.7,117.6L164.3,128.5M272.4,303.1L289.9,306M130.2,135.1L139.5,152.4M319.5,255L305.1,273.8M148.4,235.4L156.6,250M64.2,263.4L83.6,258.6M161.7,166.6L173,184M104,240L118.6,253.2M264.4,251.3L273.3,263M319,169.1L329.9,188M367.6,124.8L347.4,144.8M318.5,70L305.9,77.2M207.7,240.7L227.6,238.3M79.8,150.8L82.5,176.5M139.9,169.3L144,186.5M329.9,188L309.6,204.3M207.7,240.7L222.5,254.1M266,285.7L251.4,290.8M183.6,44.1L191.5,57.2M273.3,263L284.7,284M203.7,276.9L220.2,284.9M348.4,125.9L324.3,137.4M205.8,157.9L184.5,166.9M313.5,148.2L319,169.1M257.8,126.3L265.5,147.4M284.6,77.7L298.3,90M295.4,208.2L303.5,220.6M236.9,297.3L246.1,308.9M39.3,231.5L54.8,251.3M243.8,61.4L245.1,81.5M230.9,329.4L232.3,343.3M164.3,239.7L173.7,253.1M298.3,29.8L281.5,52.9M364.6,101.9L367.6,124.8M115.8,195.3L105.4,210.4M148.4,235.4L164.3,239.7M124.5,212.7L132.4,232.8M280.8,95.6L273.3,112.4M264.4,251.3L285.6,251M88.3,202.4L71.2,219.8M144,212.7L148.4,235.4M298.6,64.2L284.6,77.7M225.1,214.4L227.6,238.3M116.5,166.9L139.9,169.3M348.4,125.9L364.6,101.9M306.7,309.1L308.6,326.2M143.3,250.9L133.2,262.5M192.2,87.3L179.5,101.3M190.6,186.2L178,197.3M309,133L324.3,137.4M164.3,128.5L183,133.2M358.7,323.3L361.6,340.7M251.4,275.2L266,285.7M225.5,56.9L228.4,75.3M203.8,70.5L213.5,89.7M341.9,331.6L340.4,350.3M130.2,135.1L124,153.6M338.4,262.9L340,278.9M390.6,113.1L367.6,124.8M148.4,235.4L143.3,250.9M158.8,189.1L164.7,202.8M108.9,155.2L96.9,162M311.8,186.2L329.9,188M262.4,94.6L250.9,109.4M281,221.3L294.4,235.3M228.4,75.3L233.9,95.2M347.2,101.9L340.8,114.4M319.5,302.5L341.3,294.4M186.7,153.3L205.8,157.9M148.9,113.2L152.9,100M139.9,169.3L127.1,181.1M183.6,44.1L204.5,49.9M270.4,82L284.6,77.7M219.2,270L234,279.9M166.2,87.3L152.9,100M173.4,150.7L164.3,128.5M62.7,127.7L79.8,150.8M384.8,87.5L375.5,112.1M289.5,267.9L284.7,284M284.6,77.7L305.9,77.2M118.4,267.6L125.6,280.1M88.6,188.1L115.8,195.3M39.3,231.5L32.9,244.9M200.5,15.5L206.7,32.3M164.3,239.7L156.6,250M56.9,110.4L73.5,118M298.3,29.8L294.7,45.1M203.8,70.5L228.4,75.3M232.3,343.3L243.6,346.1M115.8,195.3L88.3,202.4M205.2,176.5L205.8,195.3M158.8,189.1L173,184M281,221.3L303.5,220.6M228.4,75.3L245.1,81.5M284.7,284L272.4,303.1M223.7,38.4L243.8,61.4M173,184L190.6,186.2M192.2,288.8L212.1,308.8M273.3,263L289.5,267.9M250.9,109.4L273.3,112.4M56.7,228.4L39.3,231.5M270.4,82L280.8,95.6M132.4,232.8L130.4,246.1M191.5,57.2L183.6,70.2M188,244.1L190.2,267M62.7,127.7L78.1,133.9M173.4,150.7L153,141.8M358.7,323.3L341.9,331.6M39.3,231.5L22.4,234.3M225.5,56.9L203.8,70.5M312.9,235.5L330,242.7M298.3,90L321.1,101.9M212.1,308.8L230.1,312.5M203.8,70.5L192.2,87.3M124.5,212.7L144,212.7M284.7,284L266,285.7M281,221.3L272,238.7M319.5,302.5L327.8,314.1M148.9,113.2L145.3,126.1M330,123.1L348.4,125.9M71.2,219.8L56.7,228.4M33.7,260L49.5,268.3M309.6,204.3L318.7,217.3M186.2,12.6L183.6,18.4M227.6,238.3L250.8,244.8M384.8,87.5L400.6,98.8M178,197.3L191.1,203.1M218.5,109.6L204.6,128.7M114.5,142.4L108.9,155.2M344.4,162.2L319,169.1M309,133L286.5,138.3M335.7,205.3L330,228.3M200.5,15.5L191.5,31.4M236.4,119.9L234.4,134.4M305.4,104.5L300.5,119.5M250.8,244.8L237.8,260.1M71,236.1L54.8,251.3M298.3,90L288.8,109.4M98,257.5L118.4,267.6M234.4,134.4L222.4,141.4M103.2,178.2L127.1,181.1M287.5,169.6L294.8,185.1M88,120.1L94.6,136.3M220.2,284.9L208.1,293.1M158.8,189.1L144,212.7M262.1,217.2L251.6,229.6M347.2,101.9L348.4,125.9M76.7,271.6L59.3,294.5M302.6,292.7L289.9,306M105.5,119.1L114.5,142.4M286.5,138.3L281.1,154M118.4,267.6L133.2,262.5M327.3,346.1L340.4,350.3M71.2,219.8L71,236.1M252.9,260.4L251.4,275.2M309.6,204.3L295.4,208.2M94.6,136.3L96.9,162M113.1,225.6L132.4,232.8M322.5,270.7L321,288.3M227.6,238.3L251.6,229.6M166.2,87.3L161.8,109.3M7.8,240L19.5,257.1M227.6,238.3L237.8,260.1M309,133L313.5,148.2M298.3,90L280.8,95.6M32.9,244.9L54.8,251.3M205.5,258.5L190.2,267M161.7,166.6L153,141.8M294.4,235.3L303.4,253.5M328.7,327.9L341.9,331.6M105.4,210.4L92.6,224.6M190.2,267L169.1,271.4M294.8,185.1L309.6,204.3M54.8,251.3L71.3,250.7M222.5,254.1L219.2,270M261.3,308.9L243.6,323.4M64.2,263.4L76.7,271.6M48.1,300.3L59.6,306.1M220.4,125.7L234.4,134.4M173.4,150.7L184.5,166.9M233.9,95.2L218.5,109.6M49.5,268.3L39.5,283.2M183,133.2L196.5,143.6M56.7,228.4L71,236.1M132.4,232.8L148.4,235.4M73.5,118L78.1,133.9M309.6,204.3L303.5,220.6M186.2,12.6L200.5,15.5M186.4,116.6L204.6,128.7M384.8,87.5L364.6,101.9M289.9,306L308.6,326.2M178,197.3L164.7,202.8M300.5,119.5L309,133M83.6,258.6L98,257.5M184.5,166.9L190.6,186.2M183.6,70.2L166.2,87.3M200.5,15.5L183.6,18.4M285.6,251L289.5,267.9M255.5,67.1L269.7,67.1M180.2,215.9L160.7,220.9M32.9,244.9L33.7,260M321.1,101.9L305.4,104.5M328.7,327.9L327.3,346.1M88,120.1L78.1,133.9M160.4,262.7L145.9,271.4M144,186.5L132.4,198.1M324.3,137.4L347.4,144.8M321,288.3L340,278.9M210.3,209.6L199.7,220.6M265.5,147.4L281.1,154M130.4,246.1L143.3,250.9M139.5,152.4L139.9,169.3M204.5,49.9L191.5,57.2M225.1,214.4L243.3,216.2M59.3,294.5L48.1,300.3M347.4,144.8L330.9,151.1M298.5,147.7L303.1,162.2M309.6,204.3L335.7,205.3M161.8,109.3L164.3,128.5M309.9,41.5L318.5,58.4M272,238.7L285.6,251M324.4,78.5L347.2,101.9M187.4,228.9L207.7,240.7M184.5,166.9L205.2,176.5M285.6,251L303.4,253.5M255.5,67.1L270.4,82M216.4,227.4L227.6,238.3M330.9,151.1L319,169.1M180.2,215.9L187.4,228.9M205.5,258.5L222.5,254.1M191.5,31.4L183.6,44.1M88,120.1L105.5,119.1M246.1,308.9L230.1,312.5M294.4,235.3L285.6,251M321.1,101.9L330,123.1M317.9,336.4L327.3,346.1M294.8,185.1L284.3,198.4M210.3,209.6L216.4,227.4M206.7,32.3L204.5,49.9M318.7,217.3L330,228.3M204.5,49.9L203.8,70.5M173.4,150.7L161.7,166.6M118.6,253.2L118.4,267.6M324.4,78.5L305.9,77.2M322.5,270.7L338.4,262.9M73.5,118L62.7,127.7M227.6,238.3L243.3,216.2M361.6,340.7L352.9,354.8M179.5,101.3L161.8,109.3M222.5,299.1L236.9,297.3M173.7,253.1L160.4,262.7M68.3,102L73.5,118M272.4,303.1L261.3,308.9M161.7,166.6L184.5,166.9M198.4,105.2L218.5,109.6M285.6,251L273.3,263M338.9,307.6L350.4,314.6M303.1,162.2L311.8,186.2M330.9,151.1L313.5,148.2M139.5,152.4L153,141.8M245.1,81.5L270.4,82M328.7,327.9L317.9,336.4M84.8,244.4L98,257.5M190.2,267L203.7,276.9M132.4,198.1L144,212.7M318.7,217.3L312.9,235.5M305.9,77.2L298.3,90M272,238.7L250.8,244.8M298.5,147.7L281.1,154M213.5,89.7L198.4,105.2M145.9,271.4L125.6,280.1M73.5,118L88,120.1M272,238.7L264.4,251.3M324.4,78.5L321.1,101.9M217.8,323.2L232.3,343.3M164.7,202.8L180.2,215.9M284.3,198.4L262.1,217.2M187.4,228.9L164.3,239.7M347.4,144.8L344.4,162.2M169.1,271.4L174.7,285.9M161.7,166.6L158.8,189.1M400.6,98.8L390.6,113.1M133.2,262.5L125.6,280.1M264.4,251.3L252.9,260.4M245.1,81.5L255.5,67.1M319,169.1L311.8,186.2M305.1,273.8L302.6,292.7M123,119.1L145.3,126.1M300.5,119.5L286.5,138.3M321,288.3L319.5,302.5M273.3,112.4L288.8,109.4M92.6,224.6L84.8,244.4M207.7,240.7L205.5,258.5M303.5,220.6L312.9,235.5M54,93.2L56.9,110.4M348.4,125.9L367.6,124.8M208.1,293.1L212.1,308.8M265.5,147.4L287.5,169.6M78.1,133.9L94.6,136.3M237.8,260.1L234,279.9M186.7,153.3L196.5,143.6M227.6,238.3L222.5,254.1M257.8,126.3L244.5,144.3M295.4,208.2L281,221.3M243.8,61.4L228.4,75.3M402,78.7L400.6,98.8M179.5,101.3L198.4,105.2M205.8,157.9L222.4,141.4M309.9,41.5L298.6,64.2M361.6,340.7L340.4,350.3M199.7,220.6L216.4,227.4M143.3,250.9L145.9,271.4M271.9,133.3L265.5,147.4M96.9,162L103.2,178.2M245.1,81.5L233.9,95.2M338.9,307.6L341.3,294.4M303.1,162.2L294.8,185.1M318.5,58.4L318.5,70M88.3,202.4L105.4,210.4M124,153.6L139.5,152.4M144,212.7L132.4,232.8M321,288.3L302.6,292.7M303.5,220.6L318.7,217.3M84.8,244.4L83.6,258.6M183.6,44.1L183.6,70.2M78.1,133.9L79.8,150.8M257.8,126.3L234.4,134.4M236.9,297.3L230.1,312.5M315.6,116.6L330,123.1M204.6,128.7L183,133.2M179.5,101.3L186.4,116.6M164.7,202.8L144,212.7M341.9,331.6L361.6,340.7M22.4,234.3L7.8,240M340.8,114.4L348.4,125.9M148.4,235.4L130.4,246.1M161.7,166.6L144,186.5M228.4,75.3L213.5,89.7M218.5,109.6L236.4,119.9M123,119.1L130.2,135.1M330,242.7L338.4,262.9M173,184L164.7,202.8M84.8,244.4L71.3,250.7M92.6,224.6L104,240M303.5,220.6L294.4,235.3M266,285.7L261.3,308.9M208.1,293.1L222.5,299.1M244.5,144.3L265.5,147.4M190.6,186.2L191.1,203.1M82.5,176.5L88.6,188.1M160.7,220.9L148.4,235.4M205.8,195.3L225.1,214.4M130.2,135.1L153,141.8M289.5,267.9L305.1,273.8M156.6,250L173.7,253.1M281.5,52.9L298.6,64.2M251.4,275.2L251.4,290.8M315.6,116.6L309,133M217.8,323.2L230.1,312.5M204.6,128.7L222.4,141.4M315.6,116.6L324.3,137.4M298.3,29.8L309.9,41.5M281.1,154L287.5,169.6M364.6,101.9L375.5,112.1M172.7,117.6L183,133.2M96.9,162L82.5,176.5M312.9,235.5L319.5,255M22.4,234.3L32.9,244.9M234,279.9L236.9,297.3M64.2,263.4L49.5,268.3M319.5,302.5L338.9,307.6M174.7,285.9L192.2,288.8M223.7,38.4L225.5,56.9M123,119.1L148.9,113.2M105.6,274.2L125.6,280.1M318.5,58.4L298.6,64.2M83.6,258.6L105.6,274.2M148.9,113.2L161.8,109.3M266,285.7L272.4,303.1M270.4,82L262.4,94.6M250.9,109.4L257.8,126.3M205.8,195.3L191.1,203.1M222.5,254.1L237.8,260.1M79.8,104.7L105.5,119.1M324.3,137.4L313.5,148.2M284.6,77.7L280.8,95.6M273.3,112.4L286.5,138.3M71.3,250.7L83.6,258.6M183.6,18.4L191.5,31.4M281.5,52.9L284.6,77.7M315.6,116.6L300.5,119.5M319.5,255L338.4,262.9M22.4,234.3L19.5,257.1M108.9,155.2L124,153.6M220.2,284.9L236.9,297.3M92.6,224.6L71,236.1M105.4,210.4L124.5,212.7M273.3,263L251.4,275.2M236.4,119.9L250.9,109.4M236.4,119.9L257.8,126.3M164.3,128.5L153,141.8M313.5,148.2L303.1,162.2M205.8,195.3L210.3,209.6M281.5,52.9L269.7,67.1M335.7,205.3L318.7,217.3M251.4,290.8L261.3,308.9M204.6,128.7L196.5,143.6M312.9,235.5L303.4,253.5M311.8,186.2L309.6,204.3M54.8,251.3L64.2,263.4M330,123.1L324.3,137.4M340,278.9L341.3,294.4M144,212.7L160.7,220.9M186.7,153.3L184.5,166.9M105.5,119.1L94.6,136.3M205.5,258.5L203.7,276.9M192.2,288.8L208.1,293.1M352.9,354.8L367.4,363.5M298.6,64.2L318.5,70M329.9,188L335.7,205.3M225.1,214.4L216.4,227.4M273.3,263L266,285.7M251.6,229.6L272,238.7M306.7,309.1L327.8,314.1M143.3,250.9L156.6,250M219.2,270L237.8,260.1M56.7,228.4L54.8,251.3M205.8,157.9L205.2,176.5M233.9,95.2L250.9,109.4M188,244.1L205.5,258.5M243.6,323.4L230.9,329.4M79.8,104.7L88,120.1M289.9,306L306.7,309.1M118.4,267.6L105.6,274.2M173.4,150.7L183,133.2M178,197.3L180.2,215.9M251.4,275.2L234,279.9M71.3,250.7L64.2,263.4M344.4,162.2L329.9,188M225.5,56.9L243.8,61.4M309,133L298.5,147.7M164.3,239.7L188,244.1M303.4,253.5L319.5,255M287.5,169.6L284.3,198.4M262.4,94.6L280.8,95.6M303.4,253.5L305.1,273.8M319.5,302.5L306.7,309.1M269.7,67.1L284.6,77.7M130.4,246.1L133.2,262.5M105.5,119.1L123,119.1M173,184L178,197.3M139.9,169.3L161.7,166.6M71.2,219.8L92.6,224.6M298.6,64.2L305.9,77.2M143.3,250.9L160.4,262.7M191.1,203.1L210.3,209.6M166.2,87.3L192.2,87.3M243.6,323.4L243.6,346.1M118.6,253.2L133.2,262.5M218.5,109.6L220.4,125.7M184.5,166.9L173,184M322.5,270.7L340,278.9M251.4,290.8L246.1,308.9M148.9,113.2L164.3,128.5M305.4,104.5L315.6,116.6M79.8,150.8L96.9,162M71,236.1L84.8,244.4M152.9,100L161.8,109.3M205.2,176.5L190.6,186.2M32.9,244.9L19.5,257.1M161.8,109.3L172.7,117.6M303.4,253.5L289.5,267.9M340.4,350.3L352.9,354.8M108.9,155.2L116.5,166.9M262.4,94.6L273.3,112.4M284.7,284L302.6,292.7M223.7,38.4L204.5,49.9M54.8,251.3L33.7,260M76.7,271.6L105.6,274.2M347.2,101.9L364.6,101.9M286.5,138.3L298.5,147.7M64.2,263.4L59.3,294.5M220.4,125.7L222.4,141.4M327.3,346.1L341.9,331.6M233.9,95.2L236.4,119.9M219.2,270L220.2,284.9M330,228.3L330,242.7M166.2,87.3L179.5,101.3M113.1,225.6L130.4,246.1M79.8,104.7L73.5,118M118.6,253.2L130.4,246.1M384.8,87.5L390.6,113.1M88.6,188.1L88.3,202.4M251.4,290.8L236.9,297.3M200.5,15.5L223.7,38.4M216.4,227.4L207.7,240.7M245.1,81.5L262.4,94.6M234.4,134.4L244.5,144.3M173.7,253.1L169.1,271.4M157.5,87.3L166.2,87.3M375.5,112.1L367.6,124.8M269.7,67.1L270.4,82M284.7,284L289.9,306M54.8,251.3L49.5,268.3M220.4,125.7L204.6,128.7M288.8,109.4L305.4,104.5M327.8,314.1L328.7,327.9M140.5,103.2L152.9,100M327.8,314.1L341.9,331.6M94.6,136.3L114.5,142.4M113.1,225.6L124.5,212.7M191.1,203.1L180.2,215.9M191.5,57.2L203.8,70.5M222.5,299.1L230.1,312.5M68.3,102L56.9,110.4M114.5,142.4L130.2,135.1M103.2,178.2L115.8,195.3M33.7,260L39.5,283.2M116.5,166.9L127.1,181.1M245.1,81.5L250.9,109.4M157.5,87.3L152.9,100M257.8,126.3L271.9,133.3M210.3,209.6L225.1,214.4M220.2,284.9L234,279.9M190.2,267L174.7,285.9M132.4,198.1L124.5,212.7M294.8,185.1L295.4,208.2M140.5,103.2L157.5,87.3M410.7,84.5L400.6,98.8M219.2,270L203.7,276.9M298.5,147.7L313.5,148.2M96.9,162L116.5,166.9M94.6,136.3L108.9,155.2M330,228.3L312.9,235.5M191.1,203.1L199.7,220.6M322.5,270.7L305.1,273.8M309.9,41.5L294.7,45.1M19.5,257.1L33.7,260M116.5,166.9L103.2,178.2M173.7,253.1L190.2,267M350.4,314.6L341.9,331.6M114.5,142.4L124,153.6M294.7,45.1L281.5,52.9M250.8,244.8L252.9,260.4M71,236.1L71.3,250.7M298.3,90L305.4,104.5M330.9,151.1L344.4,162.2M305.1,273.8L321,288.3M243.3,216.2L251.6,229.6M191.5,31.4L206.7,32.3M246.1,308.9L261.3,308.9M321.1,101.9L340.8,114.4M375.5,112.1L390.6,113.1M220.2,284.9L222.5,299.1M273.3,112.4L271.9,133.3M294.8,185.1L311.8,186.2M262.1,217.2L272,238.7M206.7,32.3L223.7,38.4M237.8,260.1L251.4,275.2M198.4,105.2L204.6,128.7M302.6,292.7L319.5,302.5M173.4,150.7L186.7,153.3M305.9,77.2L321.1,101.9M327.8,314.1L308.6,326.2M118.6,253.2L98,257.5M222.5,299.1L212.1,308.8M205.8,157.9L196.5,143.6M199.7,220.6L187.4,228.9M164.7,202.8L160.7,220.9M173.7,253.1L188,244.1M68.3,102L79.8,104.7M212.1,308.8L217.8,323.2M308.6,326.2L328.7,327.9M338.9,307.6L327.8,314.1M103.2,178.2L88.6,188.1M236.4,119.9L220.4,125.7M294.7,45.1L298.6,64.2M250.8,244.8L264.4,251.3M303.1,162.2L319,169.1M243.3,216.2L262.1,217.2M180.2,215.9L164.3,239.7M205.5,258.5L219.2,270M246.1,308.9L243.6,323.4M104,240L130.4,246.1M144,186.5L158.8,189.1M203.7,276.9L208.1,293.1M105.4,210.4L113.1,225.6M262.1,217.2L281,221.3M144,186.5L144,212.7M237.8,260.1L252.9,260.4M302.6,292.7L306.7,309.1M288.8,109.4L300.5,119.5M230.1,312.5L230.9,329.4M49.5,268.3L59.3,294.5M252.9,260.4L273.3,263M94.6,136.3L79.8,150.8M179.5,101.3L172.7,117.6M361.6,340.7L367.4,363.5M284.3,198.4L295.4,208.2M186.4,116.6L183,133.2M145.3,126.1L164.3,128.5M139.5,152.4L161.7,166.6M271.9,133.3L281.1,154M187.4,228.9L188,244.1M350.4,314.6L358.7,323.3M183.6,70.2L192.2,87.3M340.8,114.4L330,123.1M198.4,105.2L186.4,116.6M133.2,262.5L145.9,271.4M338.9,307.6L341.9,331.6M294.4,235.3L312.9,235.5M180.2,215.9L199.7,220.6M123,119.1L114.5,142.4M115.8,195.3L124.5,212.7M124,153.6L139.9,169.3M318.5,70L324.4,78.5M321.1,101.9L315.6,116.6M160.4,262.7L169.1,271.4M222.4,141.4L244.5,144.3M273.3,112.4L257.8,126.3M39.5,283.2L48.1,300.3M321,288.3L341.3,294.4M54,93.2L68.3,102M324.3,137.4L330.9,151.1M190.2,267L192.2,288.8M82.5,176.5L103.2,178.2M113.1,225.6L104,240M204.5,49.9L225.5,56.9M59.3,294.5L59.6,306.1M402,78.7L384.8,87.5M213.5,89.7L218.5,109.6M127.1,181.1L144,186.5M145.3,126.1L153,141.8M271.9,133.3L286.5,138.3M183.6,70.2L203.8,70.5M234,279.9L251.4,290.8M303.1,162.2L287.5,169.6M123,119.1L140.5,103.2M115.8,195.3L132.4,198.1" stroke="#000" stroke-width="2.1" fill="none" stroke-linecap="round"/><path d="M224.7,148.3L243.4,151.5M243.4,151.5L262.4,153.9M262.4,153.9L280.7,172M280.7,172L278,195.1M278,195.1L260,210.4M260,210.4L244,209M244,209L228,207.8M228,207.8L212.6,192.4M212.6,192.4L212.9,176.4M212.9,176.4L212.6,160.5M212.6,160.5L224.7,148.3M224.7,148.3L231.4,165.9M243.4,151.5L231.4,165.9M243.4,151.5L250.5,169.2M262.4,153.9L250.5,169.2M280.7,172L250.5,169.2M212.6,160.5L231.4,165.9M212.9,176.4L231.4,165.9M212.9,176.4L237.6,183.7M231.4,165.9L237.6,183.7M250.5,169.2L237.6,183.7M250.5,169.2L258.1,188.9M280.7,172L258.1,188.9M278,195.1L258.1,188.9M237.6,183.7L258.1,188.9M212.6,192.4L237.6,183.7M228,207.8L237.6,183.7M244,209L237.6,183.7M244,209L258.1,188.9M260,210.4L258.1,188.9M231.4,165.9L250.5,169.2" stroke="#9a9a9a" stroke-width="1" fill="none"/><path d="M52.2,91.4 h3.6v3.6h-3.6zM66.5,100.2 h3.6v3.6h-3.6zM78,102.9 h3.6v3.6h-3.6zM55.1,108.6 h3.6v3.6h-3.6zM71.7,116.2 h3.6v3.6h-3.6zM86.2,118.3 h3.6v3.6h-3.6zM103.7,117.3 h3.6v3.6h-3.6zM121.2,117.3 h3.6v3.6h-3.6zM138.7,101.4 h3.6v3.6h-3.6zM147.1,111.4 h3.6v3.6h-3.6zM60.9,125.9 h3.6v3.6h-3.6zM76.3,132.1 h3.6v3.6h-3.6zM92.8,134.5 h3.6v3.6h-3.6zM112.7,140.6 h3.6v3.6h-3.6zM128.4,133.3 h3.6v3.6h-3.6zM143.5,124.3 h3.6v3.6h-3.6zM78,149 h3.6v3.6h-3.6zM107.1,153.4 h3.6v3.6h-3.6zM122.2,151.8 h3.6v3.6h-3.6zM137.7,150.6 h3.6v3.6h-3.6zM95.1,160.2 h3.6v3.6h-3.6zM114.7,165.1 h3.6v3.6h-3.6zM138.1,167.5 h3.6v3.6h-3.6zM184.4,10.8 h3.6v3.6h-3.6zM198.7,13.7 h3.6v3.6h-3.6zM181.8,16.6 h3.6v3.6h-3.6zM189.7,29.6 h3.6v3.6h-3.6zM204.9,30.5 h3.6v3.6h-3.6zM221.9,36.6 h3.6v3.6h-3.6zM181.8,42.3 h3.6v3.6h-3.6zM202.7,48.1 h3.6v3.6h-3.6zM189.7,55.4 h3.6v3.6h-3.6zM223.7,55.1 h3.6v3.6h-3.6zM242,59.6 h3.6v3.6h-3.6zM181.8,68.4 h3.6v3.6h-3.6zM202,68.7 h3.6v3.6h-3.6zM226.6,73.5 h3.6v3.6h-3.6zM243.3,79.7 h3.6v3.6h-3.6zM155.7,85.5 h3.6v3.6h-3.6zM164.4,85.5 h3.6v3.6h-3.6zM190.4,85.5 h3.6v3.6h-3.6zM211.7,87.9 h3.6v3.6h-3.6zM232.1,93.4 h3.6v3.6h-3.6zM151.1,98.2 h3.6v3.6h-3.6zM177.7,99.5 h3.6v3.6h-3.6zM196.6,103.4 h3.6v3.6h-3.6zM160,107.5 h3.6v3.6h-3.6zM216.7,107.8 h3.6v3.6h-3.6zM170.9,115.8 h3.6v3.6h-3.6zM184.6,114.8 h3.6v3.6h-3.6zM234.6,118.1 h3.6v3.6h-3.6zM296.5,28 h3.6v3.6h-3.6zM308.1,39.7 h3.6v3.6h-3.6zM292.9,43.3 h3.6v3.6h-3.6zM279.7,51.1 h3.6v3.6h-3.6zM316.7,56.6 h3.6v3.6h-3.6zM253.7,65.3 h3.6v3.6h-3.6zM267.9,65.3 h3.6v3.6h-3.6zM296.8,62.4 h3.6v3.6h-3.6zM316.7,68.2 h3.6v3.6h-3.6zM322.6,76.7 h3.6v3.6h-3.6zM268.6,80.2 h3.6v3.6h-3.6zM282.8,75.9 h3.6v3.6h-3.6zM304.1,75.4 h3.6v3.6h-3.6zM296.5,88.2 h3.6v3.6h-3.6zM260.6,92.8 h3.6v3.6h-3.6zM279,93.8 h3.6v3.6h-3.6zM319.3,100.1 h3.6v3.6h-3.6zM345.4,100.1 h3.6v3.6h-3.6zM249.1,107.6 h3.6v3.6h-3.6zM271.5,110.6 h3.6v3.6h-3.6zM287,107.6 h3.6v3.6h-3.6zM303.6,102.7 h3.6v3.6h-3.6zM313.8,114.8 h3.6v3.6h-3.6zM339,112.6 h3.6v3.6h-3.6zM298.7,117.7 h3.6v3.6h-3.6zM328.2,121.3 h3.6v3.6h-3.6zM346.6,124.1 h3.6v3.6h-3.6zM256,124.5 h3.6v3.6h-3.6zM270.1,131.5 h3.6v3.6h-3.6zM307.2,131.2 h3.6v3.6h-3.6zM400.2,76.9 h3.6v3.6h-3.6zM408.9,82.7 h3.6v3.6h-3.6zM383,85.7 h3.6v3.6h-3.6zM362.8,100.1 h3.6v3.6h-3.6zM398.8,97 h3.6v3.6h-3.6zM373.7,110.3 h3.6v3.6h-3.6zM388.8,111.3 h3.6v3.6h-3.6zM365.8,123 h3.6v3.6h-3.6zM322.5,135.6 h3.6v3.6h-3.6zM345.6,143 h3.6v3.6h-3.6zM329.1,149.3 h3.6v3.6h-3.6zM80.7,174.7 h3.6v3.6h-3.6zM101.4,176.4 h3.6v3.6h-3.6zM86.8,186.3 h3.6v3.6h-3.6zM114,193.5 h3.6v3.6h-3.6zM86.5,200.6 h3.6v3.6h-3.6zM103.6,208.6 h3.6v3.6h-3.6zM69.4,218 h3.6v3.6h-3.6zM90.8,222.8 h3.6v3.6h-3.6zM111.3,223.8 h3.6v3.6h-3.6zM54.9,226.6 h3.6v3.6h-3.6zM37.5,229.7 h3.6v3.6h-3.6zM20.6,232.5 h3.6v3.6h-3.6zM6,238.2 h3.6v3.6h-3.6zM69.2,234.3 h3.6v3.6h-3.6zM102.2,238.2 h3.6v3.6h-3.6zM83,242.6 h3.6v3.6h-3.6zM31.1,243.1 h3.6v3.6h-3.6zM53,249.5 h3.6v3.6h-3.6zM69.5,248.9 h3.6v3.6h-3.6zM116.8,251.4 h3.6v3.6h-3.6zM17.7,255.3 h3.6v3.6h-3.6zM31.9,258.2 h3.6v3.6h-3.6zM62.4,261.6 h3.6v3.6h-3.6zM81.8,256.8 h3.6v3.6h-3.6zM96.2,255.7 h3.6v3.6h-3.6zM47.7,266.5 h3.6v3.6h-3.6zM116.6,265.8 h3.6v3.6h-3.6zM171.6,148.9 h3.6v3.6h-3.6zM184.9,151.5 h3.6v3.6h-3.6zM204,156.1 h3.6v3.6h-3.6zM159.9,164.8 h3.6v3.6h-3.6zM182.7,165.1 h3.6v3.6h-3.6zM203.4,174.7 h3.6v3.6h-3.6zM125.3,179.3 h3.6v3.6h-3.6zM142.2,184.7 h3.6v3.6h-3.6zM157,187.3 h3.6v3.6h-3.6zM171.2,182.2 h3.6v3.6h-3.6zM188.8,184.4 h3.6v3.6h-3.6zM130.6,196.3 h3.6v3.6h-3.6zM176.2,195.5 h3.6v3.6h-3.6zM204,193.5 h3.6v3.6h-3.6zM162.9,201 h3.6v3.6h-3.6zM189.3,201.3 h3.6v3.6h-3.6zM122.7,210.9 h3.6v3.6h-3.6zM142.2,210.9 h3.6v3.6h-3.6zM178.4,214.1 h3.6v3.6h-3.6zM208.5,207.8 h3.6v3.6h-3.6zM223.3,212.6 h3.6v3.6h-3.6zM158.9,219.1 h3.6v3.6h-3.6zM197.9,218.8 h3.6v3.6h-3.6zM130.6,231 h3.6v3.6h-3.6zM146.6,233.6 h3.6v3.6h-3.6zM185.6,227.1 h3.6v3.6h-3.6zM214.6,225.6 h3.6v3.6h-3.6zM162.5,237.9 h3.6v3.6h-3.6zM205.9,238.9 h3.6v3.6h-3.6zM225.8,236.5 h3.6v3.6h-3.6zM128.6,244.3 h3.6v3.6h-3.6zM141.5,249.1 h3.6v3.6h-3.6zM154.8,248.2 h3.6v3.6h-3.6zM171.9,251.3 h3.6v3.6h-3.6zM186.2,242.3 h3.6v3.6h-3.6zM131.4,260.7 h3.6v3.6h-3.6zM158.6,260.9 h3.6v3.6h-3.6zM203.7,256.7 h3.6v3.6h-3.6zM220.7,252.3 h3.6v3.6h-3.6zM188.4,265.2 h3.6v3.6h-3.6zM217.4,268.2 h3.6v3.6h-3.6zM218.6,123.9 h3.6v3.6h-3.6zM162.5,126.7 h3.6v3.6h-3.6zM202.8,126.9 h3.6v3.6h-3.6zM181.2,131.4 h3.6v3.6h-3.6zM232.6,132.6 h3.6v3.6h-3.6zM151.2,140 h3.6v3.6h-3.6zM194.7,141.8 h3.6v3.6h-3.6zM220.6,139.6 h3.6v3.6h-3.6zM284.7,136.5 h3.6v3.6h-3.6zM242.7,142.5 h3.6v3.6h-3.6zM263.7,145.6 h3.6v3.6h-3.6zM296.7,145.9 h3.6v3.6h-3.6zM311.7,146.4 h3.6v3.6h-3.6zM279.3,152.2 h3.6v3.6h-3.6zM301.3,160.4 h3.6v3.6h-3.6zM342.6,160.4 h3.6v3.6h-3.6zM285.7,167.8 h3.6v3.6h-3.6zM317.2,167.3 h3.6v3.6h-3.6zM293,183.3 h3.6v3.6h-3.6zM310,184.4 h3.6v3.6h-3.6zM328.1,186.2 h3.6v3.6h-3.6zM282.5,196.6 h3.6v3.6h-3.6zM307.8,202.5 h3.6v3.6h-3.6zM333.9,203.5 h3.6v3.6h-3.6zM293.6,206.4 h3.6v3.6h-3.6zM241.5,214.4 h3.6v3.6h-3.6zM260.3,215.4 h3.6v3.6h-3.6zM279.2,219.5 h3.6v3.6h-3.6zM301.7,218.8 h3.6v3.6h-3.6zM316.9,215.5 h3.6v3.6h-3.6zM328.2,226.5 h3.6v3.6h-3.6zM249.8,227.8 h3.6v3.6h-3.6zM270.2,236.9 h3.6v3.6h-3.6zM292.6,233.5 h3.6v3.6h-3.6zM311.1,233.7 h3.6v3.6h-3.6zM328.2,240.9 h3.6v3.6h-3.6zM249,243 h3.6v3.6h-3.6zM74.9,269.8 h3.6v3.6h-3.6zM103.8,272.4 h3.6v3.6h-3.6zM37.7,281.4 h3.6v3.6h-3.6zM57.5,292.7 h3.6v3.6h-3.6zM46.3,298.5 h3.6v3.6h-3.6zM57.8,304.3 h3.6v3.6h-3.6zM144.1,269.6 h3.6v3.6h-3.6zM167.3,269.6 h3.6v3.6h-3.6zM123.8,278.3 h3.6v3.6h-3.6zM172.9,284.1 h3.6v3.6h-3.6zM201.9,275.1 h3.6v3.6h-3.6zM218.4,283.1 h3.6v3.6h-3.6zM190.4,287 h3.6v3.6h-3.6zM206.3,291.3 h3.6v3.6h-3.6zM220.7,297.3 h3.6v3.6h-3.6zM210.3,307 h3.6v3.6h-3.6zM216,321.4 h3.6v3.6h-3.6zM262.6,249.5 h3.6v3.6h-3.6zM283.8,249.2 h3.6v3.6h-3.6zM301.6,251.7 h3.6v3.6h-3.6zM317.7,253.2 h3.6v3.6h-3.6zM236,258.3 h3.6v3.6h-3.6zM251.1,258.6 h3.6v3.6h-3.6zM271.5,261.2 h3.6v3.6h-3.6zM287.7,266.1 h3.6v3.6h-3.6zM320.7,268.9 h3.6v3.6h-3.6zM336.6,261.1 h3.6v3.6h-3.6zM249.6,273.4 h3.6v3.6h-3.6zM232.2,278.1 h3.6v3.6h-3.6zM303.3,272 h3.6v3.6h-3.6zM282.9,282.2 h3.6v3.6h-3.6zM264.2,283.9 h3.6v3.6h-3.6zM319.2,286.5 h3.6v3.6h-3.6zM300.8,290.9 h3.6v3.6h-3.6zM249.6,289 h3.6v3.6h-3.6zM235.1,295.5 h3.6v3.6h-3.6zM270.6,301.3 h3.6v3.6h-3.6zM288.1,304.2 h3.6v3.6h-3.6zM317.7,300.7 h3.6v3.6h-3.6zM337.1,305.8 h3.6v3.6h-3.6zM244.3,307.1 h3.6v3.6h-3.6zM259.5,307.1 h3.6v3.6h-3.6zM304.9,307.3 h3.6v3.6h-3.6zM228.3,310.7 h3.6v3.6h-3.6zM326,312.3 h3.6v3.6h-3.6zM241.8,321.6 h3.6v3.6h-3.6zM229.1,327.6 h3.6v3.6h-3.6zM306.8,324.4 h3.6v3.6h-3.6zM326.9,326.1 h3.6v3.6h-3.6zM230.5,341.5 h3.6v3.6h-3.6zM241.8,344.3 h3.6v3.6h-3.6zM316.1,334.6 h3.6v3.6h-3.6zM325.5,344.3 h3.6v3.6h-3.6zM338.2,277.1 h3.6v3.6h-3.6zM339.5,292.6 h3.6v3.6h-3.6zM348.6,312.8 h3.6v3.6h-3.6zM356.9,321.5 h3.6v3.6h-3.6zM340.1,329.8 h3.6v3.6h-3.6zM359.8,338.9 h3.6v3.6h-3.6zM338.6,348.5 h3.6v3.6h-3.6zM351.1,353 h3.6v3.6h-3.6zM374.3,356.3 h3.6v3.6h-3.6zM365.6,361.7 h3.6v3.6h-3.6zM223.3,146.9 h2.8v2.8h-2.8zM242,150.1 h2.8v2.8h-2.8zM261,152.5 h2.8v2.8h-2.8zM279.3,170.6 h2.8v2.8h-2.8zM276.6,193.7 h2.8v2.8h-2.8zM258.6,209 h2.8v2.8h-2.8zM242.6,207.6 h2.8v2.8h-2.8zM226.6,206.4 h2.8v2.8h-2.8zM211.2,191 h2.8v2.8h-2.8zM211.5,175 h2.8v2.8h-2.8zM211.2,159.1 h2.8v2.8h-2.8zM230,164.5 h2.8v2.8h-2.8zM249.1,167.8 h2.8v2.8h-2.8zM236.2,182.3 h2.8v2.8h-2.8zM256.7,187.5 h2.8v2.8h-2.8z" fill="#f00"/></svg>
<!-- spin box -->
<div class="a spin"></div>
<div class="a" style="left:1122px;top:718px;width:1px;height:21px;background:#a0a0a0"></div>
<div class="a" style="left:1123px;top:718px;width:15px;height:21px;background:linear-gradient(#fafafa,#ececec);border-radius:0 2px 2px 0"></div>
<svg class="a" style="left:1124px;top:719px" width="14" height="20" viewBox="0 0 14 20"><path d="M2.2 6.6 L7 2.4 L11 6.6 Z M2.2 12.2 L11 12.2 L7 16.6 Z" fill="#555"/></svg>
<div class="a" style="left:771px;top:720px;width:20px;height:18px;background:#308cc6"></div>
<div class="a" style="left:771px;top:720px;width:1px;height:18px;background:#e0701a"></div>
<div class="a dot" style="left:1200px;top:824px;background:#b5b5b5"></div><div class="a dot" style="left:1200px;top:821px;background:#b5b5b5"></div><div class="a dot" style="left:1200px;top:818px;background:#b5b5b5"></div><div class="a dot" style="left:1200px;top:815px;background:#b5b5b5"></div><div class="a dot" style="left:1197px;top:824px;background:#b5b5b5"></div><div class="a dot" style="left:1197px;top:821px;background:#b5b5b5"></div><div class="a dot" style="left:1197px;top:818px;background:#b5b5b5"></div><div class="a dot" style="left:1194px;top:824px;background:#b5b5b5"></div><div class="a dot" style="left:1194px;top:821px;background:#b5b5b5"></div><div class="a dot" style="left:1191px;top:824px;background:#b5b5b5"></div>
<svg class="txt" width="1204" height="829" viewBox="0 0 1204 829"><text x="488.2" y="22" textLength="227" lengthAdjust="spacing" font-size="18.5" fill="#d3dae3" stroke="#d3dae3" stroke-width="0.4" font-weight="bold">Spatial Model Editor []</text><text x="12.2" y="47.7" textLength="27" lengthAdjust="spacing" font-size="16" fill="#000" stroke="#000" stroke-width="0.25">File</text><text x="53.4" y="47.7" textLength="50" lengthAdjust="spacing" font-size="16" fill="#000" stroke="#000" stroke-width="0.25">Import</text><text x="118" y="47.7" textLength="38" lengthAdjust="spacing" font-size="16" fill="#000" stroke="#000" stroke-width="0.25">Tools</text><text x="171.8" y="47.7" textLength="74" lengthAdjust="spacing" font-size="16" fill="#000" stroke="#000" stroke-width="0.25">Advanced</text><text x="260.6" y="47.7" textLength="34.4" lengthAdjust="spacing" font-size="16" fill="#000" stroke="#000" stroke-width="0.25">Help</text><text x="325.2" y="105.2" textLength="74.6" lengthAdjust="spacing" font-size="16" fill="#000" stroke="#000" stroke-width="0.25">Geometry</text><text x="428.8" y="106" textLength="57.8" lengthAdjust="spacing" font-size="16" fill="#000" stroke="#000" stroke-width="0.25">Species</text><text x="515.6" y="106" textLength="73.6" lengthAdjust="spacing" font-size="16" fill="#000" stroke="#000" stroke-width="0.25">Reactions</text><text x="618.4" y="106" textLength="71.8" lengthAdjust="spacing" font-size="16" fill="#000" stroke="#000" stroke-width="0.25">Functions</text><text x="718.8" y="106" textLength="86.4" lengthAdjust="spacing" font-size="16" fill="#000" stroke="#000" stroke-width="0.25">Parameters</text><text x="834.2" y="106" textLength="66.6" lengthAdjust="spacing" font-size="16" fill="#000" stroke="#000" stroke-width="0.25">Simulate</text><text x="335" y="151.5" textLength="131.2" lengthAdjust="spacing" font-size="16.5" fill="#000" stroke="#000" stroke-width="0.4" font-weight="bold">Compartments:</text><text x="339.2" y="178.1" textLength="77.2" lengthAdjust="spacing" font-size="16" fill="#fff" stroke="#fff" stroke-width="0.25">cytoplasm</text><text x="338.6" y="195.7" textLength="58.1" lengthAdjust="spacing" font-size="16" fill="#000" stroke="#000" stroke-width="0.25">nucleus</text><text x="383" y="458.9" textLength="28.8" lengthAdjust="spacing" font-size="16" fill="#000" stroke="#000" stroke-width="0.25">Add</text><text x="497.8" y="459.2" textLength="60.8" lengthAdjust="spacing" font-size="16" fill="#000" stroke="#000" stroke-width="0.25">Remove</text><text x="335.2" y="487.9" textLength="104.2" lengthAdjust="spacing" font-size="16.5" fill="#000" stroke="#000" stroke-width="0.4" font-weight="bold">Membranes:</text><text x="339.2" y="513.4" textLength="174.4" lengthAdjust="spacing" font-size="16" fill="#000" stroke="#000" stroke-width="0.25">cytoplasm &lt;-&gt; nucleus</text><text x="594.8" y="153.4" textLength="169.8" lengthAdjust="spacing" font-size="16" fill="#000" stroke="#000" stroke-width="0.25">Compartment Settings</text><text x="609.6" y="190.9" textLength="48.8" lengthAdjust="spacing" font-size="16" fill="#000" stroke="#000" stroke-width="0.25">Name:</text><text x="668.8" y="190.9" textLength="77" lengthAdjust="spacing" font-size="16" fill="#000" stroke="#000" stroke-width="0.25">cytoplasm</text><text x="883.4" y="190.9" textLength="53.6" lengthAdjust="spacing" font-size="16" fill="#000" stroke="#000" stroke-width="0.25">Colour:</text><text x="623.2" y="228" textLength="152" lengthAdjust="spacing" font-size="16" fill="#000" stroke="#000" stroke-width="0.25">Compartment Pixels</text><text x="804.4" y="228" textLength="119.8" lengthAdjust="spacing" font-size="16" fill="#000" stroke="#000" stroke-width="0.25">Boundary Pixels</text><text x="953" y="228" textLength="116" lengthAdjust="spacing" font-size="16" fill="#000" stroke="#000" stroke-width="0.25">Boundary Lines</text><text x="1097.8" y="226.6" textLength="40.4" lengthAdjust="spacing" font-size="16" fill="#000" stroke="#000" stroke-width="0.25">Mesh</text><text x="621.6" y="733.9" textLength="137.2" lengthAdjust="spacing" font-size="16" fill="#000" stroke="#000" stroke-width="0.25">Max triangle area:</text><text x="771.2" y="733.6" textLength="18.6" lengthAdjust="spacing" font-size="16" fill="#fff" stroke="#fff" stroke-width="0.25">27</text><text x="8" y="820.8" textLength="434.6" lengthAdjust="spacing" font-size="16" fill="#000" stroke="#000" stroke-width="0.25">The mesh representing the geometry of the compartment</text></svg><div class="a" style="left:12px;top:50px;width:10px;height:1px;background:#000"></div><div class="a" style="left:54px;top:50px;width:5px;height:1px;background:#000"></div><div class="a" style="left:117px;top:50px;width:10px;height:1px;background:#000"></div><div class="a" style="left:171px;top:50px;width:11px;height:1px;background:#000"></div><div class="a" style="left:262px;top:50px;width:10px;height:1px;background:#000"></div>
</body></html>
